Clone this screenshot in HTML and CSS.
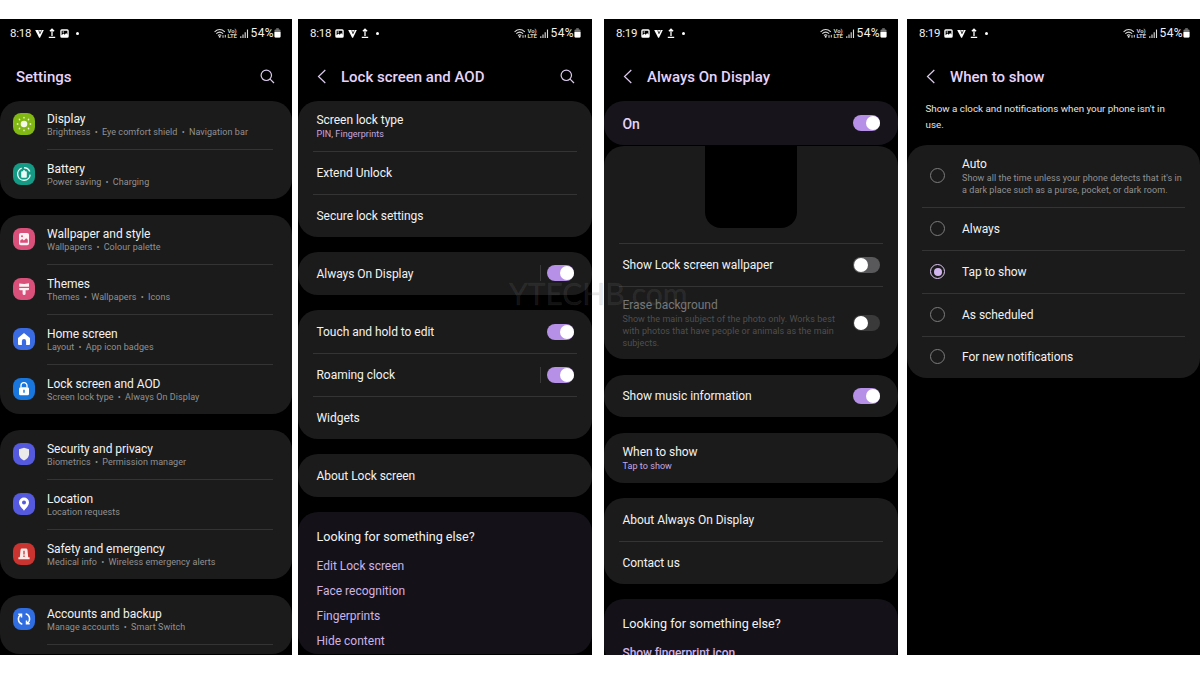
FILE: index.html
```html
<!doctype html>
<html lang="en">
<head>
    <meta charset="utf-8">
    <title>Always On Display settings</title>
    <link rel="stylesheet" href="styles.css">
</head>
<body>
    <!-- shared icons -->
    <svg class="defs" width="0" height="0">
        <symbol id="i-vee" viewBox="0 0 10 10"><path d="M.2 1h9.600L5.600 9.600H4.600L.2 1z" fill="#fff"/><path d="M4.200 1.500l1.300 3.700 1.700-3.700" fill="none" stroke="#000" stroke-width=".8"/></symbol>
        <symbol id="i-up" viewBox="0 0 8 10"><path d="M4 8V1.400M1.900 3.300L4 1.200l2.100 2.100M.8 9.400h6.400" fill="none" stroke="#fff" stroke-width="1.300"/></symbol>
        <symbol id="i-pic" viewBox="0 0 10 10"><path fill-rule="evenodd" d="M2 .3h6A1.700 1.700 0 0 1 9.700 2v6A1.700 1.700 0 0 1 8 9.700H2A1.700 1.700 0 0 1 .3 8V2A1.700 1.700 0 0 1 2 .3zM1.800 2v5l2-1.900 1.500 1.400 1.500-2L8.200 6V2z" fill="#fff"/><circle cx="3.600" cy="3.300" r=".8" fill="#fff"/></symbol>
        <symbol id="i-net" viewBox="0 0 36 11">
            <g fill="none" stroke="#ddd" stroke-width="1.100">
                <path d="M.6 3.800Q5.700-.8 10.800 3.800M2.300 5.700Q5.700 2.600 9.100 5.700M4 7.500Q5.700 6 7.300 7.500"/>
                <path d="M9 7.200v2.600M11.300 9.500V6.900" stroke-width="1"/>
            </g>
            <circle cx="5.700" cy="8.800" r="1" fill="#ddd"/>
            <path d="M26.800 10V8.200M29 10V6.500M31.200 10V4.200M33.500 10V1.500" stroke="#ddd" stroke-width="1.100"/>
        </symbol>
        <symbol id="i-batt" viewBox="0 0 7 10"><path d="M2.200.5h2.600v1H2.200z" fill="#bbb"/><rect x=".5" y="1.500" width="6" height="8" rx="1" fill="#777"/><path d="M.5 4h6v4.500a1 1 0 0 1-1 1h-4a1 1 0 0 1-1-1z" fill="#fff"/></symbol>
        <symbol id="i-search" viewBox="0 0 15 15"><circle cx="6.300" cy="6.300" r="5.200"/><path d="M10.100 10.100l3.900 3.900"/></symbol>
        <symbol id="i-back" viewBox="0 0 10 15"><path d="M8.300 1L1.500 7.500l6.800 6.500"/></symbol>
    </svg>

    <div class="phone phone-settings">
        <div class="status">
            <span class="time">8:18</span>
            <svg class="s-vee"><use href="#i-vee"/></svg><svg class="s-up"><use href="#i-up"/></svg><svg class="s-pic"><use href="#i-pic"/></svg><i class="dot"></i>
            <span class="net"><svg class="s-net"><use href="#i-net"/></svg><span class="volte">Vo)<br>LTE</span></span>
            <span class="pct">54%</span><svg class="s-batt"><use href="#i-batt"/></svg>
        </div>
        <div class="header">
            <h1>Settings</h1>
            <svg class="search"><use href="#i-search"/></svg>
        </div>

        <div class="card first">
            <div class="item">
                <svg class="icon" viewBox="0 0 22 22"><rect width="22" height="22" rx="8" fill="#82b814"/><circle cx="11" cy="11" r="3.300" fill="#f5f9e8"/><g stroke="#f5f9e8" stroke-width="1.300" stroke-linecap="round"><path d="M11 4.300v.6M11 17.100v.6M4.300 11h.6M17.100 11h.6M6.300 6.300l.4.400M15.300 15.300l.4.400M6.300 15.700l.4-.4M15.300 6.700l.4-.4"/></g></svg>
                <div class="label"><b>Display</b><small>Brightness<i>•</i>Eye comfort shield<i>•</i>Navigation bar</small></div>
            </div>
            <div class="item">
                <svg class="icon" viewBox="0 0 22 22"><rect width="22" height="22" rx="8" fill="#159a85"/><path d="M8.700 5.100A6.300 6.300 0 1 0 17.200 11.600M16.800 8.500A6.300 6.300 0 0 0 11 4.700" fill="none" stroke="#e9fbf6" stroke-width="1.400"/><path d="M10 7.300h2v1h1a.8.800 0 0 1 .8.800V14a.8.800 0 0 1-.8.800H9a.8.800 0 0 1-.8-.8V9.100a.8.800 0 0 1 .8-.8h1z" fill="#e9fbf6"/></svg>
                <div class="label"><b>Battery</b><small>Power saving<i>•</i>Charging</small></div>
            </div>
        </div>

        <div class="card">
            <div class="item">
                <svg class="icon" viewBox="0 0 22 22"><rect width="22" height="22" rx="8" fill="#d9507b"/><rect x="6" y="5" width="10" height="12.300" rx="1.800" fill="#fff0f4"/><circle cx="9" cy="8.300" r="1" fill="#d9507b"/><path d="M7.200 14.700v-2.300l2-1.400 1.700 1.500 2.300-2.200 1.600 1.400v3z" fill="#d9507b"/></svg>
                <div class="label"><b>Wallpaper and style</b><small>Wallpapers<i>•</i>Colour palette</small></div>
            </div>
            <div class="item">
                <svg class="icon" viewBox="0 0 22 22"><rect width="22" height="22" rx="8" fill="#d9507b"/><path d="M6.200 5.500l5 .5 4.800-.8v3.600H6.200zM6.200 10H16v1.200a1 1 0 0 1-1 1h-2.400v3.300a1.500 1.500 0 0 1-3 0v-3.300H7.200a1 1 0 0 1-1-1z" fill="#fff0f4"/></svg>
                <div class="label"><b>Themes</b><small>Themes<i>•</i>Wallpapers<i>•</i>Icons</small></div>
            </div>
            <div class="item">
                <svg class="icon" viewBox="0 0 22 22"><rect width="22" height="22" rx="8" fill="#3a6be3"/><path d="M11 4.900l6 5V16a1 1 0 0 1-1 1h-2.900v-3.800a2.100 2.100 0 0 0-4.200 0V17H6a1 1 0 0 1-1-1V9.900z" fill="#fff"/></svg>
                <div class="label"><b>Home screen</b><small>Layout<i>•</i>App icon badges</small></div>
            </div>
            <div class="item">
                <svg class="icon" viewBox="0 0 22 22"><rect width="22" height="22" rx="8" fill="#1976dc"/><path d="M8 9.500V7.600a3 3 0 0 1 6 0v1.900" fill="none" stroke="#fff" stroke-width="1.300"/><rect x="6" y="9.200" width="10" height="8.100" rx="1.500" fill="#fff"/><path d="M11 11.700v3" stroke="#1976dc" stroke-width="1.400"/></svg>
                <div class="label"><b>Lock screen and AOD</b><small>Screen lock type<i>•</i>Always On Display</small></div>
            </div>
        </div>

        <div class="card">
            <div class="item">
                <svg class="icon" viewBox="0 0 22 22"><rect width="22" height="22" rx="8" fill="#5459de"/><path d="M11 4.700l5 1.600v5q0 3.800-5 6.200-5-2.400-5-6.200v-5z" fill="#ebe9e9"/></svg>
                <div class="label"><b>Security and privacy</b><small>Biometrics<i>•</i>Permission manager</small></div>
            </div>
            <div class="item">
                <svg class="icon" viewBox="0 0 22 22"><rect width="22" height="22" rx="8" fill="#5459de"/><path fill-rule="evenodd" d="M11 4.500a5 5 0 0 1 5 5c0 3.200-2.900 5.300-5 8.200-2.100-2.900-5-5-5-8.200a5 5 0 0 1 5-5zm0 3a2 2 0 1 0 0 4 2 2 0 0 0 0-4z" fill="#fff"/></svg>
                <div class="label"><b>Location</b><small>Location requests</small></div>
            </div>
            <div class="item">
                <svg class="icon" viewBox="0 0 22 22"><rect width="22" height="22" rx="8" fill="#c93430"/><path d="M6.800 14.200l.7-7.300A1.500 1.500 0 0 1 9 5.500h4a1.500 1.500 0 0 1 1.500 1.400l.7 7.300h1.400v2H5.400v-2z" fill="#fbeaea"/><path d="M11 7.700v3.700M11 12.500v1.400" stroke="#c93430" stroke-width="1.300"/></svg>
                <div class="label"><b>Safety and emergency</b><small>Medical info<i>•</i>Wireless emergency alerts</small></div>
            </div>
        </div>

        <div class="card last">
            <div class="item">
                <svg class="icon" viewBox="0 0 22 22"><rect width="22" height="22" rx="8" fill="#2f6de0"/><g fill="none" stroke="#fff" stroke-width="1.500"><path d="M9.300 16.300A5.300 5.300 0 0 1 7.600 6.900M5.300 6.300h3.200v3.200M12.700 5.700a5.300 5.300 0 0 1 1.700 9.400M16.700 15.700h-3.200v-3.200"/></g></svg>
                <div class="label"><b>Accounts and backup</b><small>Manage accounts<i>•</i>Smart Switch</small></div>
            </div>
            <div class="item"></div>
        </div>
    </div>

    <div class="phone">
        <div class="status">
            <span class="time">8:18</span>
            <svg class="s-pic"><use href="#i-pic"/></svg><svg class="s-vee"><use href="#i-vee"/></svg><svg class="s-up"><use href="#i-up"/></svg><i class="dot"></i>
            <span class="net"><svg class="s-net"><use href="#i-net"/></svg><span class="volte">Vo)<br>LTE</span></span>
            <span class="pct">54%</span><svg class="s-batt"><use href="#i-batt"/></svg>
        </div>
        <div class="header">
            <svg class="back"><use href="#i-back"/></svg>
            <h1>Lock screen and AOD</h1>
            <svg class="search"><use href="#i-search"/></svg>
        </div>

        <div class="card">
            <div class="row two-line"><div class="label"><b>Screen lock type</b><small class="accent">PIN, Fingerprints</small></div></div>
            <div class="row"><b>Extend Unlock</b></div>
            <div class="row"><b>Secure lock settings</b></div>
        </div>
        <div class="card">
            <div class="row"><b>Always On Display</b><span class="toggle on split"></span></div>
        </div>
        <div class="card">
            <div class="row"><b>Touch and hold to edit</b><span class="toggle on"></span></div>
            <div class="row"><b>Roaming clock</b><span class="toggle on split"></span></div>
            <div class="row"><b>Widgets</b></div>
        </div>
        <div class="card">
            <div class="row"><b>About Lock screen</b></div>
        </div>
        <div class="card more last">
            <h2>Looking for something else?</h2>
            <a>Edit Lock screen</a>
            <a>Face recognition</a>
            <a>Fingerprints</a>
            <a>Hide content</a>
        </div>
    </div>

    <div class="phone phone-aod">
        <div class="status">
            <span class="time">8:19</span>
            <svg class="s-pic"><use href="#i-pic"/></svg><svg class="s-vee"><use href="#i-vee"/></svg><svg class="s-up"><use href="#i-up"/></svg><i class="dot"></i>
            <span class="net"><svg class="s-net"><use href="#i-net"/></svg><span class="volte">Vo)<br>LTE</span></span>
            <span class="pct">54%</span><svg class="s-batt"><use href="#i-batt"/></svg>
        </div>
        <div class="header">
            <svg class="back"><use href="#i-back"/></svg>
            <h1>Always On Display</h1>
        </div>

        <div class="card master">
            <div class="row"><b>On</b><span class="toggle on"></span></div>
        </div>
        <div class="card">
            <div class="preview"><div class="preview-phone"></div></div>
            <div class="row"><b>Show Lock screen wallpaper</b><span class="toggle"></span></div>
            <div class="row erase">
                <div class="label"><b>Erase background</b><small>Show the main subject of the photo only. Works best<br>with photos that have people or animals as the main<br>subjects.</small></div>
                <span class="toggle off-dim"></span>
            </div>
        </div>
        <div class="card">
            <div class="row"><b>Show music information</b><span class="toggle on"></span></div>
        </div>
        <div class="card">
            <div class="row two-line"><div class="label"><b>When to show</b><small class="accent">Tap to show</small></div></div>
        </div>
        <div class="card">
            <div class="row"><b>About Always On Display</b></div>
            <div class="row"><b>Contact us</b></div>
        </div>
        <div class="card more">
            <h2>Looking for something else?</h2>
            <a class="strong">Show fingerprint icon</a>
        </div>
    </div>

    <div class="phone phone-when">
        <div class="status">
            <span class="time">8:19</span>
            <svg class="s-pic"><use href="#i-pic"/></svg><svg class="s-vee"><use href="#i-vee"/></svg><svg class="s-up"><use href="#i-up"/></svg><i class="dot"></i>
            <span class="net"><svg class="s-net"><use href="#i-net"/></svg><span class="volte">Vo)<br>LTE</span></span>
            <span class="pct">54%</span><svg class="s-batt"><use href="#i-batt"/></svg>
        </div>
        <div class="header">
            <svg class="back"><use href="#i-back"/></svg>
            <h1>When to show</h1>
        </div>
        <p class="intro">Show a clock and notifications when your phone isn't in<br>use.</p>

        <div class="card">
            <div class="row auto"><span class="radio"></span><div class="label"><b>Auto</b><small>Show all the time unless your phone detects that it's in<br>a dark place such as a purse, pocket, or dark room.</small></div></div>
            <div class="row"><span class="radio"></span><b>Always</b></div>
            <div class="row"><span class="radio checked"></span><b>Tap to show</b></div>
            <div class="row"><span class="radio"></span><b>As scheduled</b></div>
            <div class="row"><span class="radio"></span><b>For new notifications</b></div>
        </div>
    </div>

    <div class="watermark">YTECHB.com</div>
</body>
</html>
```
FILE: styles.css
```css
* {
    box-sizing: border-box;
}

body {
    margin: 0;
    width: 1200px;
    height: 675px;
    padding-top: 19px;
    background: #fff;
    color: #f2f2f2;
    font-family: Roboto, "Liberation Sans", sans-serif;
    display: flex;
    overflow: hidden;
    position: relative;
}

.defs {
    position: absolute;
}

.phone {
    width: 294px;
    height: 636px;
    margin-right: 12px;
    background: #000;
    display: flex;
    flex-direction: column;
    overflow: hidden;
    flex-shrink: 0;
}

.phone-settings {
    width: 292px;
    margin-right: 6px;
}

.phone-aod {
    margin-right: 9px;
}

.phone-when {
    width: 293px;
    margin-right: 0;
}

/* Status bar */
.status {
    height: 28px;
    padding: 0 11px 0 12px;
    display: flex;
    align-items: center;
    flex-shrink: 0;
}

.phone-settings .status {
    padding-left: 10px;
}

.phone-when .status {
    padding-right: 10px;
}

.time {
    width: 25px;
    font-size: 11.5px;
    letter-spacing: -0.2px;
}

.status svg {
    flex-shrink: 0;
}

.s-vee {
    width: 9px;
    height: 9px;
    margin-right: 4px;
}

.s-up {
    width: 8px;
    height: 10px;
    margin-right: 4px;
}

.s-pic {
    width: 9px;
    height: 9px;
    margin-right: 4px;
}

.dot {
    width: 3px;
    height: 3px;
    margin-left: 3px;
    border-radius: 50%;
    background: #fff;
}

.net {
    margin-left: auto;
    position: relative;
    height: 11px;
}

.s-net {
    width: 36px;
    height: 11px;
    display: block;
}

.volte {
    position: absolute;
    left: 14px;
    top: 0.5px;
    font-size: 6px;
    line-height: 5px;
    letter-spacing: -0.1px;
    font-weight: 700;
    color: #ccc;
}

.pct {
    margin-left: 1px;
    font-size: 12px;
    letter-spacing: 0.4px;
}

.s-batt {
    width: 7px;
    height: 10px;
}

/* Page header */
.header {
    height: 54px;
    padding: 5px 17px 0 19px;
    display: flex;
    align-items: center;
    flex-shrink: 0;
}

.phone-settings .header {
    padding-left: 16px;
}

.header h1 {
    margin: 1px 0 0;
    font-size: 15px;
    font-weight: 500;
    color: #e6d4fa;
}

.header svg {
    fill: none;
    stroke: #dccbed;
    stroke-width: 1.2;
}

.back {
    width: 10px;
    height: 15px;
    margin-right: 14px;
}

.search {
    width: 15px;
    height: 15px;
    margin-left: auto;
}

/* Cards */
.card {
    background: #1b1b1b;
    border-radius: 20px;
    margin-bottom: 15.5px;
    overflow: hidden;
    flex-shrink: 0;
}

.card b {
    font-size: 12px;
    font-weight: 400;
    line-height: 14px;
    letter-spacing: -0.04px;
}

.card small {
    font-size: 9px;
    line-height: 12px;
    letter-spacing: 0.06px;
    color: #929292;
}

.card .accent {
    color: #c5a9e6;
}

.label {
    display: flex;
    flex-direction: column;
}

.card.last {
    flex: 1;
    margin-bottom: 1px;
}

.item {
    height: 50px;
    margin: 0 19px 0 13px;
    display: flex;
    position: relative;
}

.item:last-child {
    height: 49.5px;
}

.item + .item::before,
.row + .row::before,
.preview + .row::before {
    content: "";
    position: absolute;
    top: 0;
    right: 0;
    left: 34px;
    height: 1px;
    background: #343434;
}

.item + .item::before {
    top: -0.5px;
}

.first .item:first-child {
    height: 48.5px;
}

.first .item:first-child .icon {
    margin-top: 12px;
}

.first .item:first-child .label {
    padding-top: 10.5px;
}

.icon {
    width: 22px;
    height: 22px;
    margin: 13.5px 12px 0 0;
}

.item .label {
    padding-top: 12px;
}

.item small {
    margin-top: 0.5px;
}

.item small i {
    font-style: normal;
    margin: 0 4.2px;
}

.row {
    height: 43px;
    margin: 0 15px;
    padding: 1px 3px 0 3.5px;
    display: flex;
    align-items: center;
    position: relative;
}

.row:last-child {
    height: 42.5px;
}

.row + .row::before,
.preview + .row::before {
    left: 0;
}

.row.two-line {
    height: 50px;
}

.two-line small {
    margin-top: 1px;
}

/* Toggles */
.toggle {
    width: 27px;
    height: 16px;
    margin: -1px 0 0 auto;
    border-radius: 8px;
    background: #59595b;
    position: relative;
    flex-shrink: 0;
}

.toggle::after {
    content: "";
    position: absolute;
    top: 1px;
    left: 1px;
    width: 14px;
    height: 14px;
    border-radius: 50%;
    background: #fff;
}

.toggle.on {
    background: #b590e6;
}

.toggle.on::after {
    left: 12.5px;
}

.toggle.off-dim {
    background: #3a3a3b;
}

.toggle.split::before {
    content: "";
    position: absolute;
    left: -7px;
    width: 1px;
    height: 16px;
    background: #383838;
}

/* Looking for something else? */
.card.more {
    background: #141218;
    padding: 17px 18.5px 0;
}

.more h2 {
    margin: 0 0 8.5px;
    font-size: 12.6px;
    font-weight: 400;
    line-height: 16px;
}

.more a {
    display: block;
    font-size: 12px;
    line-height: 25px;
    color: #cdb3e8;
}

.more .strong {
    font-weight: 500;
    letter-spacing: -0.1px;
}

/* Always On Display */
.master {
    background: #17151b;
    margin-bottom: 0.5px;
}

.master .row {
    height: 44px;
}

.card.master b {
    font-size: 14px;
    font-weight: 500;
    color: #e6d4fa;
}

.preview {
    height: 97.5px;
}

.preview-phone {
    width: 92px;
    height: 82.5px;
    margin: 0 auto;
    border-radius: 0 0 16px 16px;
    background: #000;
}

.row.erase {
    height: 73px;
    padding-top: 2px;
}

.card .erase b {
    color: #777;
}

.card .erase small {
    margin-top: 1px;
    color: #4f4f4f;
}

/* When to show */
.intro {
    height: 44px;
    margin: 0;
    padding-left: 18.5px;
    font-size: 9.8px;
    line-height: 16px;
    color: #e4e4e4;
}

.phone-when .row {
    padding-left: 8px;
}

.phone-when .row.auto {
    height: 61.5px;
}

.auto small {
    margin-top: 1px;
}

.radio {
    width: 15px;
    height: 15px;
    margin: -1px 17px 0 0;
    border: 1px solid #7c7c7c;
    border-radius: 50%;
    flex-shrink: 0;
}

.radio.checked {
    border: 1.5px solid #dcc6f2;
    padding: 2.5px;
    background: #d3b6f0 content-box;
}

.watermark {
    position: absolute;
    left: 509px;
    top: 274px;
    font-family: Lato, sans-serif;
    font-size: 30px;
    line-height: 38px;
    color: rgba(120, 120, 120, 0.17);
    -webkit-text-stroke: 0.6px rgba(120, 120, 120, 0.12);
}
```
